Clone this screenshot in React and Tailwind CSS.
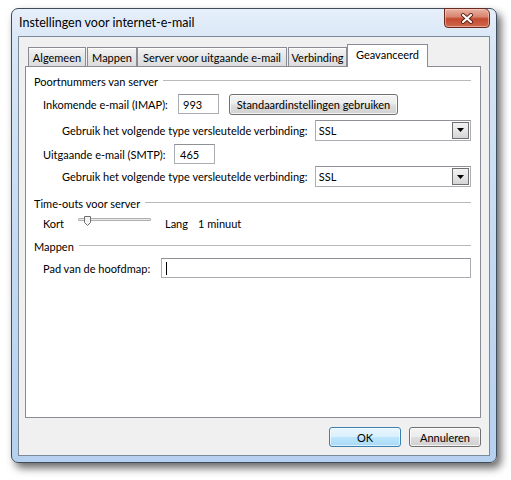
export default function App() {
  const btn =
    "flex items-center justify-center rounded-[3px] border border-[#707070] bg-[linear-gradient(to_bottom,#f4f4f4_0%,#ececec_48%,#dedede_52%,#d0d0d0_100%)] shadow-[inset_0_0_0_1px_rgba(255,255,255,0.75)] text-black";
  const tab =
    "flex items-center justify-center h-[19px] border border-b-0 border-[#898c95] bg-[linear-gradient(to_bottom,#f4f4f4_0%,#e6e6e6_50%,#dcdcdc_100%)] shadow-[inset_0_1px_0_#ffffff]";
  const input = "border border-[#abadb3] border-t-[#8e9196] bg-white";

  const Header = ({ children, cls }) => (
    <div className={"flex items-center h-[18px] " + cls}>
      <span className="whitespace-nowrap">{children}</span>
      <div className="flex-1 ml-[5px] h-px bg-[#b9b9b9] mt-[-1px]" />
    </div>
  );

  const Select = () => (
    <div className={"relative flex items-center w-[157px] h-[21px] " + input}>
      <span className="pl-[3px]">SSL</span>
      <div className="ml-auto mr-[1px] w-[17px] h-[17px] border border-[#707070] bg-[linear-gradient(to_bottom,#f2f2f2_0%,#e6e6e6_50%,#d4d4d4_100%)] flex items-center justify-center">
        <svg width="7" height="4" viewBox="0 0 7 4">
          <path d="M0 0H7L3.5 4Z" fill="#000" />
        </svg>
      </div>
    </div>
  );

  return (
    <div className="w-[511px] h-[480px] bg-white font-['Lato',sans-serif] text-[11px] leading-none text-black">
      <div className="pl-[11px] pt-[8px]">
        <div className="w-[486px] h-[455px] rounded-[7px] border border-[#3f4c5a] bg-[linear-gradient(to_bottom,#e6effa_0%,#d8e6f6_8%,#c6dbf2_50%,#b6d0ef_100%)] shadow-[4px_5px_9px_rgba(0,0,0,0.6)] flex flex-col">
          {/* Title bar */}
          <div className="flex h-[27px] items-start">
            <span className="pl-[7px] pt-[8px] text-[12.5px] whitespace-nowrap">Instellingen voor internet-e-mail</span>
            <div className="ml-auto mr-[6px] mt-[-1px] w-[46px] h-[20px] rounded-b-[4px] rounded-tr-[6px] border border-[#6b2a1f] bg-[linear-gradient(to_bottom,#eab3a6_0%,#d98670_42%,#c24a30_55%,#d0694e_100%)] shadow-[inset_0_0_0_1px_rgba(255,220,210,0.5)] flex items-center justify-center">
              <svg width="14" height="11" viewBox="0 0 14 11">
                <path d="M3 2L11 9M11 2L3 9" stroke="#5a2015" strokeWidth="4" strokeLinecap="round" />
                <path d="M3 2L11 9M11 2L3 9" stroke="#ffffff" strokeWidth="2.2" strokeLinecap="round" />
              </svg>
            </div>
          </div>

          {/* Client area */}
          <div className="mx-[6px] w-[472px] h-[420px] border border-[#7b8a99] bg-[#f0f0f0] flex flex-col">
            <div className="pl-[6px] pt-[7px]">
              {/* Tabs */}
              <div className="flex items-end h-[22px] pl-[3px]">
                <div className={tab + " w-[58px]"}>Algemeen</div>
                <div className={tab + " w-[50px] ml-[1px]"}>Mappen</div>
                <div className={tab + " w-[150px]"}>Server voor uitgaande e-mail</div>
                <div className={tab + " w-[59px] ml-[1px]"}>Verbinding</div>
                <div className="relative z-10 -mb-px w-[81px] h-[23px] border border-b-0 border-[#898c95] bg-white flex items-center justify-center pb-[3px]">
                  Geavanceerd
                </div>
              </div>

              {/* Panel */}
              <div className="w-[456px] h-[352px] border border-[#898c95] bg-white flex flex-col pl-[8px] pr-[9px]">
                <Header cls="mt-[5px]">Poortnummers van server</Header>

                <div className="flex items-center h-[20px] mt-[4px] pl-[9px]">
                  <span className="w-[135px] whitespace-nowrap">Inkomende e-mail (IMAP):</span>
                  <div className={"w-[41px] h-[20px] flex items-center pl-[4px] " + input}>993</div>
                  <div className={btn + " ml-[10px] w-[169px] h-[21px]"}>Standaardinstellingen gebruiken</div>
                </div>

                <div className="flex items-center h-[20px] mt-[6px] pl-[28px]">
                  <span className="w-[254px] whitespace-nowrap">Gebruik het volgende type versleutelde verbinding:</span>
                  <Select />
                </div>

                <div className="flex items-center h-[20px] mt-[4px] pl-[9px]">
                  <span className="w-[131px] whitespace-nowrap">Uitgaande e-mail (SMTP):</span>
                  <div className={"w-[41px] h-[20px] flex items-center pl-[5px] " + input}>465</div>
                </div>

                <div className="flex items-center h-[21px] mt-[2px] pl-[28px]">
                  <span className="w-[254px] whitespace-nowrap">Gebruik het volgende type versleutelde verbinding:</span>
                  <Select />
                </div>

                <Header cls="mt-[7px]">Time-outs voor server</Header>

                <div className="flex items-center h-[20px] mt-[1px] pl-[9px]">
                  <span className="w-[35px]">Kort</span>
                  <div className="relative w-[73px] h-[11px] mt-[-4px]">
                    <div className="absolute left-0 right-0 top-[2px] h-[3px] border border-[#b0b0b0] bg-[#e7eaea] rounded-[1px]" />
                    <svg className="absolute left-[6px] top-0" width="7" height="10" viewBox="0 0 7 10">
                      <path d="M0.5 0.5H6.5V6.5L3.5 9.5L0.5 6.5Z" fill="#f3f3f3" stroke="#6f6f6f" />
                    </svg>
                  </div>
                  <span className="ml-[14px] w-[33px]">Lang</span>
                  <span>1 minuut</span>
                </div>

                <Header cls="mt-[4px]">Mappen</Header>

                <div className="flex items-center h-[20px] mt-[3px] pl-[9px]">
                  <span className="w-[119px] whitespace-nowrap">Pad van de hoofdmap:</span>
                  <div className={"w-[311px] h-[20px] flex items-center pl-[4px] " + input}>
                    <div className="w-px h-[13px] bg-black" />
                  </div>
                </div>
              </div>
            </div>

            {/* Buttons */}
            <div className="flex justify-end gap-[8px] mt-[9px] pr-[8px]">
              <div className="flex items-center justify-center w-[72px] h-[20px] rounded-[3px] border border-[#3c7fb1] bg-[linear-gradient(to_bottom,#eaf6fd_0%,#d9f0fc_48%,#bee6fd_52%,#a7d9f5_100%)] shadow-[inset_0_0_0_1px_rgba(255,255,255,0.6)]">
                OK
              </div>
              <div className={btn + " w-[72px] h-[20px]"}>Annuleren</div>
            </div>
          </div>
        </div>
      </div>
    </div>
  );
}
